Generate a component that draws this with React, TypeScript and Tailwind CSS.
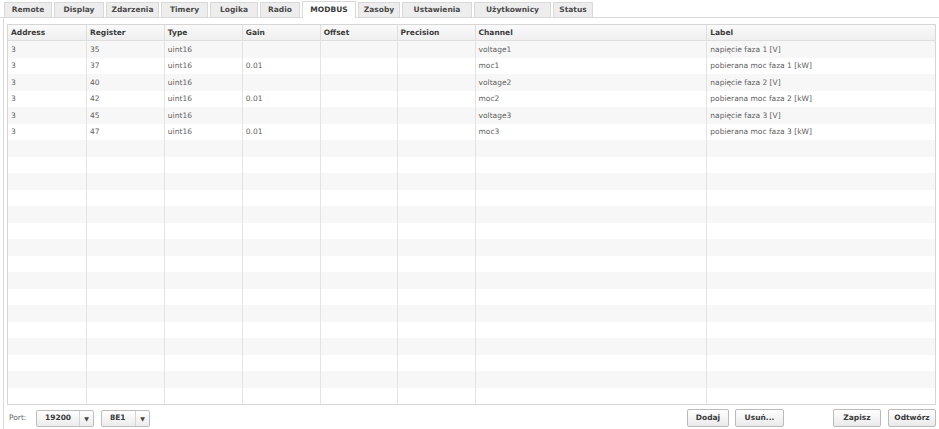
import React from "react";

const tabs = [
  { label: "Remote", w: 48 },
  { label: "Display", w: 50 },
  { label: "Zdarzenia", w: 53 },
  { label: "Timery", w: 47 },
  { label: "Logika", w: 48 },
  { label: "Radio", w: 40 },
  { label: "MODBUS", w: 54, active: true },
  { label: "Zasoby", w: 42 },
  { label: "Ustawienia", w: 70 },
  { label: "Użytkownicy", w: 77 },
  { label: "Status", w: 40 },
];

const cols = [
  { label: "Address", w: 78 },
  { label: "Register", w: 78 },
  { label: "Type", w: 78 },
  { label: "Gain", w: 78 },
  { label: "Offset", w: 77 },
  { label: "Precision", w: 78 },
  { label: "Channel", w: 232 },
  { label: "Label", w: 229 },
];

const data: string[][] = [
  ["3", "35", "uint16", "", "", "", "voltage1", "napięcie faza 1 [V]"],
  ["3", "37", "uint16", "0.01", "", "", "moc1", "pobierana moc faza 1 [kW]"],
  ["3", "40", "uint16", "", "", "", "voltage2", "napięcie faza 2 [V]"],
  ["3", "42", "uint16", "0.01", "", "", "moc2", "pobierana moc faza 2 [kW]"],
  ["3", "45", "uint16", "", "", "", "voltage3", "napięcie faza 3 [V]"],
  ["3", "47", "uint16", "0.01", "", "", "moc3", "pobierana moc faza 3 [kW]"],
];

const rows: string[][] = [];
for (let i = 0; i < 22; i++) rows.push(data[i] ?? ["", "", "", "", "", "", "", ""]);

function Select({ value, w, split }: { value: string; w: number; split: number }) {
  return (
    <div
      className="flex h-[17px] items-stretch rounded-[2px] border border-[#bdbdbd] bg-gradient-to-b from-white to-[#ececec] text-[7.5px] font-bold text-[#3a3a3a]"
      style={{ width: w }}
    >
      <div className="flex items-center pl-[8px]" style={{ width: split }}>
        {value}
      </div>
      <div className="flex flex-1 items-center justify-center border-l border-[#d4d4d4] text-[6px] text-[#444]">
        ▼
      </div>
    </div>
  );
}

function Btn({ label, w }: { label: string; w: number }) {
  return (
    <div
      className="flex h-[18px] items-center justify-center rounded-[2px] border border-[#bababa] bg-gradient-to-b from-white to-[#eaeaea] text-[7.5px] font-bold text-[#3a3a3a]"
      style={{ width: w }}
    >
      {label}
    </div>
  );
}

export default function App() {
  return (
    <div
      className="relative h-[429px] w-[939px] overflow-hidden bg-white text-[#555]"
      style={{ fontFamily: '"DejaVu Sans", Verdana, sans-serif' }}
    >
      {/* Tabs */}
      <div className="flex h-[18px] items-end gap-[2px] border-b border-[#d9d9d9] pl-[4px]">
        {tabs.map((t) => (
          <div
            key={t.label}
            className={
              t.active
                ? "-mb-px flex h-[17px] items-center justify-center border border-b-0 border-[#d9d9d9] bg-white text-[7.5px] font-bold text-[#3a3a3a]"
                : "flex h-[15px] items-center justify-center border border-b-0 border-[#d9d9d9] bg-[#ededed] text-[7.5px] font-bold text-[#4a4a4a]"
            }
            style={{ width: t.w }}
          >
            {t.label}
          </div>
        ))}
      </div>

      {/* Panel */}
      <div className="ml-[3px] flex h-[411px] flex-col border-l border-[#d9d9d9] pl-[3px] pt-[6px]">
        <div className="w-[929px] border border-[#d6d6d6]">
          <div className="flex h-[16px] border-b border-[#dedede] bg-gradient-to-b from-[#fafafa] to-[#efefef]">
            {cols.map((c, i) => (
              <div
                key={c.label}
                className={`flex items-center pl-[3px] text-[7.5px] font-bold text-[#3a3a3a] ${i > 0 ? "border-l border-[#dedede]" : ""}`}
                style={{ width: c.w }}
              >
                {c.label}
              </div>
            ))}
          </div>
          {rows.map((r, ri) => (
            <div
              key={ri}
              className={`flex h-[16.5px] ${ri % 2 === 0 ? "bg-[#f7f7f7]" : "bg-white"}`}
            >
              {r.map((cell, ci) => (
                <div
                  key={ci}
                  className={`flex items-center pl-[3px] text-[7.5px] text-[#606060] ${ci > 0 ? "border-l border-[#e3e3e3]" : ""}`}
                  style={{ width: cols[ci].w }}
                >
                  {cell}
                </div>
              ))}
            </div>
          ))}
        </div>

        {/* Footer */}
        <div className="mt-[4px] flex items-center">
          <span className="ml-[2px] w-[27px] text-[7.5px] text-[#666]">Port:</span>
          <Select value="19200" w={58} split={42} />
          <div className="w-[7px]" />
          <Select value="8E1" w={49} split={33} />
          <div className="flex-1" />
          <Btn label="Dodaj" w={42} />
          <div className="w-[6px]" />
          <Btn label="Usuń..." w={49} />
          <div className="w-[49px]" />
          <Btn label="Zapisz" w={48} />
          <div className="w-[7px]" />
          <Btn label="Odtwórz" w={48} />
          <div className="w-[3px]" />
        </div>
      </div>
    </div>
  );
}
